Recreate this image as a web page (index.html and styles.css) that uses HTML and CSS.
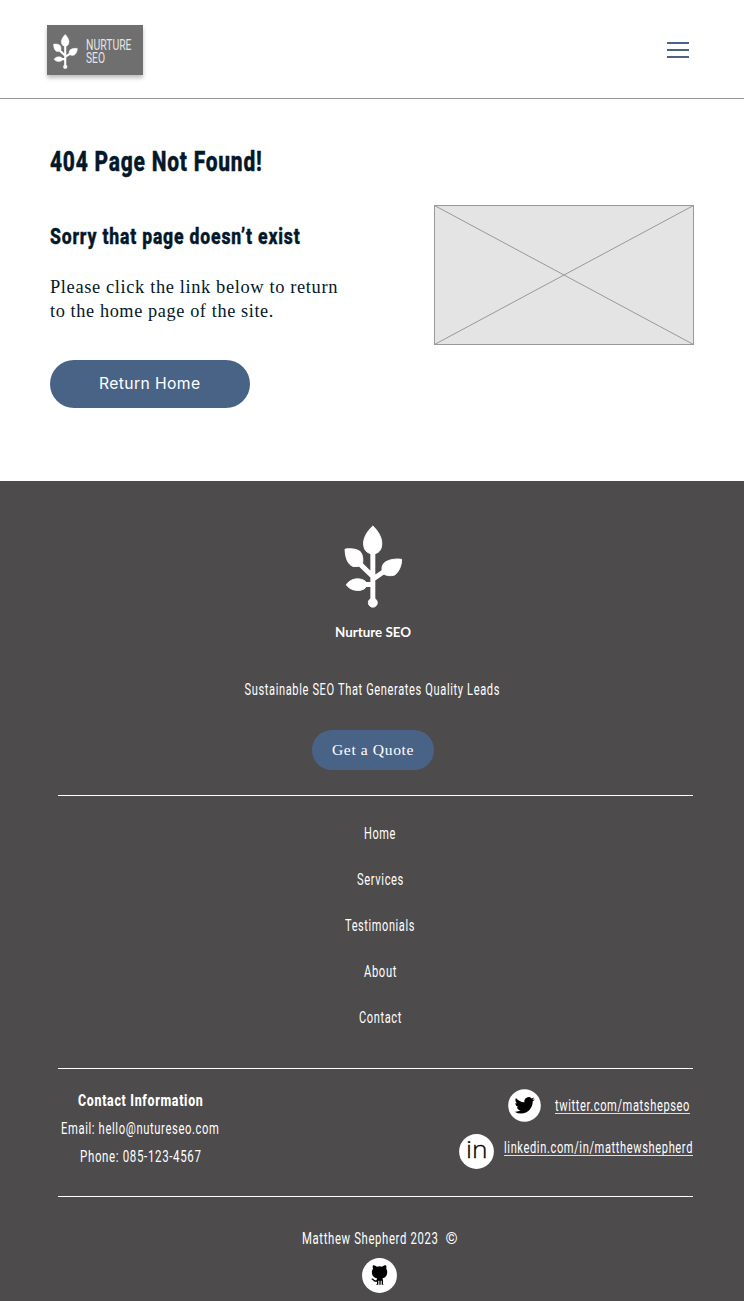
FILE: index.html
```html
<!DOCTYPE html>
<html lang="en">
<head>
<meta charset="utf-8">
<title>Nurture SEO</title>
<link rel="stylesheet" href="styles.css">
</head>
<body>
<svg class="sprite" aria-hidden="true">
  <symbol id="plant" viewBox="70 44 178 251">
    <g fill="#fff" stroke="#fff" stroke-width="3" stroke-linejoin="round">
      <path d="M157 47C166 55 184 77 184 99C184 119 175 131 157 131C139 131 129 119 129 99C129 77 148 55 157 47Z"/>
      <path d="M73 117C86 114 107 116 117 123C126 131 128 145 126 161C122 169 107 171 96 169C82 162 74 146 73 117Z"/>
      <path d="M244 148C231 145 206 148 195 156C184 164 182 176 188 191C197 198 212 199 223 195C236 186 244 166 244 148Z"/>
      <path d="M77 225C85 211 101 206 115 207C127 208 137 213 140 224C137 236 127 241 114 242C98 242 85 237 77 225Z"/>
      <circle cx="157" cy="279" r="13.500"/>
    </g>
    <g fill="none" stroke="#fff" stroke-width="15"><path d="M157 125V275M116 160L157 200M192 184L157 208M130 224H157"/></g>
  </symbol>
</svg>

<header class="header">
  <a class="logo" href="#">
    <svg class="logo-mark" width="25" height="35"><use href="#plant"/></svg>
    <svg class="logo-name" width="46" height="28"><text x="0" y="12.500" textLength="45.500" lengthAdjust="spacingAndGlyphs">NURTURE</text><text x="0" y="26" textLength="19" lengthAdjust="spacingAndGlyphs">SEO</text></svg>
  </a>
  <button class="menu" aria-label="Menu"><i></i><i></i><i></i></button>
</header>

<main class="main">
  <h1><svg width="214" height="36"><text class="display t1" x="0" y="26" textLength="212.500" lengthAdjust="spacingAndGlyphs">404 Page Not Found!</text></svg></h1>
  <div class="columns">
    <section class="message">
      <h2><svg width="252" height="30"><text class="display t2" x="0" y="23" textLength="250.500" lengthAdjust="spacingAndGlyphs">Sorry that page doesn’t exist</text></svg></h2>
      <p><svg width="290" height="48"><text class="serif" x="0" y="18.700" textLength="288" lengthAdjust="spacingAndGlyphs">Please click the link below to return</text><text class="serif" x="0" y="42.700" textLength="224" lengthAdjust="spacingAndGlyphs">to the home page of the site.</text></svg></p>
      <a class="button" href="#"><svg width="102" height="24"><text class="label" x="0" y="17" textLength="101.500" lengthAdjust="spacingAndGlyphs">Return Home</text></svg></a>
    </section>
    <svg class="placeholder" width="260" height="140"><rect x=".5" y=".5" width="259" height="139"/><path d="M.5.5L259.5 139.5M259.5.5L.5 139.5"/></svg>
  </div>
</main>

<footer class="footer">
  <div class="brand">
    <svg class="brand-mark" width="59" height="83"><use href="#plant"/></svg>
    <svg class="brand-name" width="76" height="18"><text x="0" y="13" textLength="76" lengthAdjust="spacingAndGlyphs">Nurture SEO</text></svg>
    <svg class="line" width="256" height="24"><text x="0.500" y="17.500" textLength="255.500" lengthAdjust="spacingAndGlyphs">Sustainable SEO That Generates Quality Leads</text></svg>
    <a class="quote" href="#"><svg width="82" height="20"><text x="0" y="15" textLength="82" lengthAdjust="spacingAndGlyphs">Get a Quote</text></svg></a>
  </div>
  <nav class="nav">
    <a href="#"><svg class="line" width="32" height="24"><text x="0" y="17.500" textLength="32" lengthAdjust="spacingAndGlyphs">Home</text></svg></a>
    <a href="#"><svg class="line" width="47" height="24"><text x="0" y="17.500" textLength="47" lengthAdjust="spacingAndGlyphs">Services</text></svg></a>
    <a href="#"><svg class="line" width="70" height="24"><text x="0" y="17.500" textLength="70" lengthAdjust="spacingAndGlyphs">Testimonials</text></svg></a>
    <a href="#"><svg class="line" width="33" height="24"><text x="0" y="17.500" textLength="33" lengthAdjust="spacingAndGlyphs">About</text></svg></a>
    <a href="#"><svg class="line" width="43" height="24"><text x="0" y="17.500" textLength="43" lengthAdjust="spacingAndGlyphs">Contact</text></svg></a>
  </nav>
  <div class="details">
    <div class="contact">
      <svg class="line strong" width="126" height="24"><text x="0" y="17.500" textLength="125.500" lengthAdjust="spacingAndGlyphs">Contact Information</text></svg>
      <svg class="line" width="159" height="24"><text x="0" y="17.500" textLength="158.500" lengthAdjust="spacingAndGlyphs">Email: hello@nutureseo.com</text></svg>
      <svg class="line" width="122" height="24"><text x="0" y="17.500" textLength="121.500" lengthAdjust="spacingAndGlyphs">Phone: 085-123-4567</text></svg>
    </div>
    <div class="social">
      <a class="twitter" href="#">
        <svg width="33" height="33" viewBox="0 0 33 33"><circle cx="16.5" cy="16.5" r="16.3" fill="#fff"/><path transform="translate(6.600 6.300) scale(.84)" d="M23.953 4.57a10 10 0 01-2.825.775 4.958 4.958 0 002.163-2.723c-.951.555-2.005.959-3.127 1.184a4.92 4.92 0 00-8.384 4.482C7.69 8.095 4.067 6.13 1.64 3.162a4.822 4.822 0 00-.666 2.475c0 1.71.87 3.213 2.188 4.096a4.904 4.904 0 01-2.228-.616v.06a4.923 4.923 0 003.946 4.827 4.996 4.996 0 01-2.212.085 4.936 4.936 0 004.604 3.417 9.867 9.867 0 01-6.102 2.105c-.39 0-.779-.023-1.17-.067a13.995 13.995 0 007.557 2.209c9.053 0 13.998-7.496 13.998-13.985 0-.21 0-.42-.015-.63A9.935 9.935 0 0024 4.59z"/></svg>
        <svg class="line link" width="135" height="24"><text x="0" y="17.500" textLength="135" lengthAdjust="spacingAndGlyphs">twitter.com/matshepseo</text><path d="M0 20.5H135"/></svg>
      </a>
      <a class="linkedin" href="#">
        <svg width="35" height="35" viewBox="0 0 35 35"><circle cx="17.5" cy="17.5" r="17.4" fill="#fff"/><text class="in" x="7" y="23.800" textLength="21.500" lengthAdjust="spacingAndGlyphs">in</text></svg>
        <svg class="line link" width="189" height="24"><text x="0" y="17.500" textLength="189" lengthAdjust="spacingAndGlyphs">linkedin.com/in/matthewshepherd</text><path d="M0 20.5H189"/></svg>
      </a>
    </div>
  </div>
  <div class="credit">
    <svg class="line" width="157" height="24"><text x="0" y="17.500" textLength="136.500" lengthAdjust="spacingAndGlyphs">Matthew Shepherd 2023</text><text x="143.500" y="17.500" textLength="13" lengthAdjust="spacingAndGlyphs">©</text></svg>
    <a class="github" href="#" aria-label="GitHub"><svg width="35" height="35" viewBox="0 0 105 105"><circle cx="52.500" cy="52.500" r="52.300" fill="#fff"/><path d="M33 22C37 21 42 24 45 26Q53 24 60 26C64 23 69 21 72 22Q74 27 73 32C77 38 76 48 73 53C70 58 66 60 61 61Q63 64 63 68V77L65 80H59V68H56V80H52V68H49V80H42L45 77V71Q36 73 33 67Q31 65 28 64L29 62C35 60 36 68 41 67Q45 68 45 61C39 60 34 57 31 51C29 44 29 37 33 32Q31 27 33 22Z"/></svg></a>
  </div>
</footer>
</body>
</html>
```

FILE: styles.css
```css
* { box-sizing: border-box; }
body { margin: 0; width: 744px; background: #fff; color: #04182a; font-family: Roboto, sans-serif; }
svg { display: block; flex: none; overflow: visible; }
h1, h2, p { margin: 0; font-weight: inherit; }
a { display: block; color: inherit; text-decoration: none; }
.sprite { position: absolute; width: 0; height: 0; }

.header { display: flex; justify-content: space-between; align-items: flex-start; height: 99px; padding: 25px 55px 0 47px; border-bottom: 1px solid #969696; }
.logo { display: flex; gap: 8px; width: 96px; height: 50px; padding: 9px 0 0 6px; background: #6f6f6f; box-shadow: 0 3px 4px rgba(0, 0, 0, .25); }
.logo-name { margin-top: 3px; fill: #e4e4e4; font: 400 15px Roboto, sans-serif; }
.menu { display: flex; flex-direction: column; gap: 5px; margin-top: 17px; padding: 0; border: 0; background: none; }
.menu i { width: 22px; height: 2px; background: #496387; }

.main { height: 382px; padding: 46px 50px 0; }
.display { fill: #04182a; stroke: #04182a; stroke-width: .4px; font-weight: 800; letter-spacing: 1px; }
.t1 { font-size: 27px; }
.t2 { font-size: 21.500px; }
.columns { display: flex; justify-content: space-between; align-items: flex-start; padding-top: 24px; }
.message { padding-top: 16px; }
.message p { margin: 23px 0 37.500px; }
.serif { fill: #04182a; font: 18px "Liberation Serif", serif; letter-spacing: .6px; }
.button { display: flex; align-items: center; justify-content: center; width: 200px; height: 48px; border-radius: 24px; background: #496387; }
.label { fill: #fff; font: 16px Inter, sans-serif; letter-spacing: .4px; }
.placeholder { fill: #e4e4e4; stroke: #999; }

.footer { height: 820px; padding: 44px 51px 0 58px; background: #4d4b4c; fill: #fff; }
.line { font-size: 16px; letter-spacing: .9px; }
.strong { font-weight: 800; }
.brand { display: flex; flex-direction: column; align-items: center; height: 271px; padding-right: 7px; border-bottom: 1px solid #fff; }
.brand-name { margin-top: 16px; margin-left: 2px; font: 700 13px Lato, sans-serif; }
.brand .line { margin-top: 35px; }
.brand-mark { margin-left: 2px; }
.quote { display: flex; align-items: center; justify-content: center; width: 122px; height: 40px; margin: 29px 0 0 2px; border-radius: 20px; background: #496387; font: 15.500px "Liberation Serif", serif; letter-spacing: .6px; }
.nav { display: flex; flex-direction: column; align-items: center; gap: 22px; height: 273px; padding: 25px 0 0 9px; border-bottom: 1px solid #fff; }
.details { display: flex; justify-content: space-between; height: 128px; border-bottom: 1px solid #fff; }
.contact { display: flex; flex-direction: column; align-items: center; gap: 4px; padding: 19px 0 0 3px; }
.social { display: flex; flex-direction: column; align-items: flex-end; padding-top: 20px; }
.social a { display: flex; align-items: flex-start; }
.twitter { gap: 14px; height: 45px; padding-right: 3px; }
.twitter .link { margin-top: 4px; }
.linkedin { gap: 10px; }
.linkedin .link { margin-top: 1px; }
.twitter path { fill: #000; }
.social .link path { stroke: #ddd; fill: none; }
.in { fill: #000; stroke: #000; stroke-width: .3px; font: 300 24px "Open Sans", sans-serif; letter-spacing: 0; }
.credit { display: flex; flex-direction: column; align-items: center; gap: 8px; padding: 29px 0 0 9px; }
.credit path { fill: #000; }
.github { margin-right: 1px; }
```
